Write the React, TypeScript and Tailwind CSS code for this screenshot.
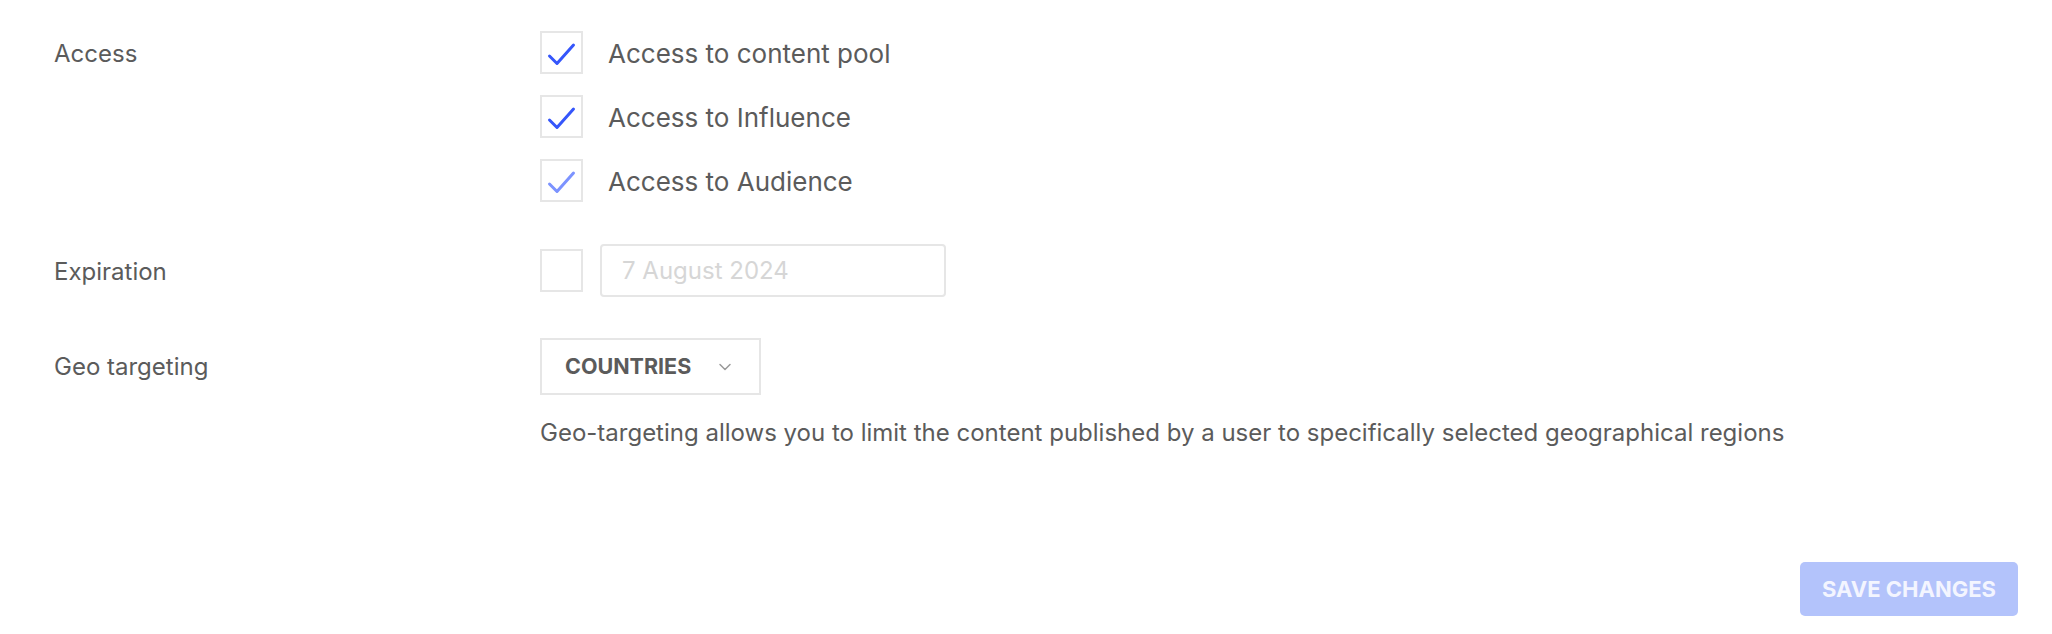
import { ChevronDown } from "lucide-react";

interface CheckProps {
  checked?: boolean;
  faded?: boolean;
}

function CheckBox({ checked = false, faded = false }: CheckProps) {
  return (
    <div className="flex h-[43px] w-[43px] flex-none items-center justify-center border-2 border-[#e6e6e6] bg-white">
      {checked && (
        <svg width="43" height="43" viewBox="0 0 43 43" fill="none" className="flex-none">
          <path
            d="M9.5 25L17 32.5L33.5 14"
            stroke={faded ? "#7c93ff" : "#3556fb"}
            strokeWidth="3"
            strokeLinecap="round"
            strokeLinejoin="round"
          />
        </svg>
      )}
    </div>
  );
}

const accessItems = [
  { label: "Access to content pool", faded: false },
  { label: "Access to Influence", faded: false },
  { label: "Access to Audience", faded: true },
];

function App() {
  return (
    <div
      className="flex h-[634px] w-[2052px] flex-col bg-white pl-[54px] pr-[34px] pt-[31px] text-[#5b5b5b]"
      style={{ fontFamily: "Inter, 'Noto Sans', sans-serif" }}
    >
      {/* access */}
      <div className="flex">
        <div className="flex h-[43px] w-[486px] flex-none items-center pt-[2px] text-[24px]">
          Access
        </div>
        <div className="flex flex-col gap-[21px]">
          {accessItems.map((item) => (
            <label key={item.label} className="flex items-center gap-[25px]">
              <CheckBox checked faded={item.faded} />
              <span className="pt-[2px] text-[26px] leading-none">{item.label}</span>
            </label>
          ))}
        </div>
      </div>

      {/* expiration */}
      <div className="mt-[42px] flex items-center">
        <div className="w-[486px] flex-none pt-[2px] text-[24px]">Expiration</div>
        <div className="flex items-center gap-[17px]">
          <CheckBox />
          <div className="flex h-[53px] w-[346px] items-center rounded-[4px] border-2 border-[#e6e6e6] px-[20px] text-[24px] text-[#d6d6d6]">
            7 August 2024
          </div>
        </div>
      </div>

      {/* geo targeting */}
      <div className="mt-[41px] flex">
        <div className="flex h-[57px] w-[486px] flex-none items-center text-[24px]">
          Geo targeting
        </div>
        <div className="flex flex-col items-start">
          <button className="flex h-[57px] w-[221px] items-center justify-between border-2 border-[#e6e6e6] pl-[23px] pr-[24px]">
            <span className="text-[21.5px] font-bold text-[#5b5b5b]">COUNTRIES</span>
            <ChevronDown className="size-[20px] text-[#9a9a9a]" strokeWidth={1.8} />
          </button>
          <p className="mt-[22px] text-[24px] leading-[32px]">
            Geo-targeting allows you to limit the content published by a user to specifically
            selected geographical regions
          </p>
        </div>
      </div>

      <div className="mt-auto mb-[18px] flex justify-end">
        <button className="h-[54px] w-[218px] rounded-[5px] bg-[#b3c3fb] text-[22px] font-bold text-[#f3f5ff]">
          SAVE CHANGES
        </button>
      </div>
    </div>
  );
}

export default App;
